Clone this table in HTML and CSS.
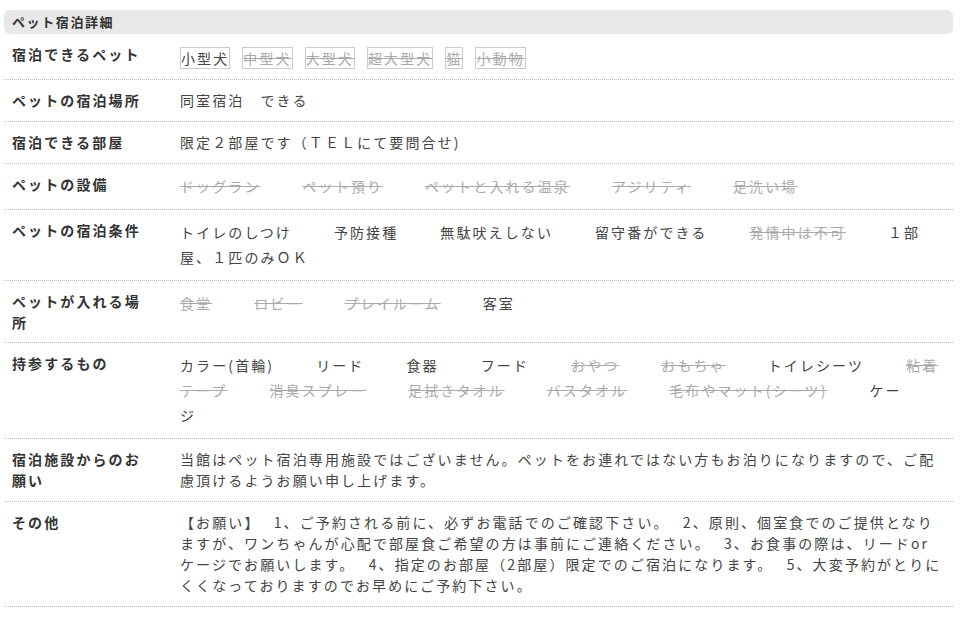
FILE: index.html
```html
<!DOCTYPE html>
<html lang="ja">
<head>
    <meta charset="UTF-8">
    <title>ペット宿泊詳細</title>
    <link rel="stylesheet" href="styles.css">
</head>
<body>
    <div class="pet-detail">
        <h2 class="pet-title">ペット宿泊詳細</h2>

        <dl class="pet-list">
            <div class="pet-row">
                <dt>宿泊できるペット</dt>
                <dd class="tags"><span class="tag">小型犬</span><span class="tag off">中型犬</span><span class="tag off">大型犬</span><span class="tag off">超大型犬</span><span class="tag off">猫</span><span class="tag off">小動物</span></dd>
            </div>
            <div class="pet-row">
                <dt>ペットの宿泊場所</dt>
                <dd>同室宿泊　できる</dd>
            </div>
            <div class="pet-row">
                <dt>宿泊できる部屋</dt>
                <dd>限定２部屋です（ＴＥＬにて要問合せ)</dd>
            </div>
            <div class="pet-row">
                <dt>ペットの設備</dt>
                <dd class="items"><span class="off">ドッグラン</span><span class="off">ペット預り</span><span class="off">ペットと入れる温泉</span><span class="off">アジリティ</span><span class="off">足洗い場</span></dd>
            </div>
            <div class="pet-row">
                <dt>ペットの宿泊条件</dt>
                <dd class="items"><span>トイレのしつけ</span><span>予防接種</span><span>無駄吠えしない</span><span>留守番ができる</span><span class="off">発情中は不可</span><span>１部屋、１匹のみＯＫ</span></dd>
            </div>
            <div class="pet-row">
                <dt>ペットが入れる場所</dt>
                <dd class="items"><span class="off">食堂</span><span class="off">ロビー</span><span class="off">プレイルーム</span><span>客室</span></dd>
            </div>
            <div class="pet-row">
                <dt>持参するもの</dt>
                <dd class="items"><span>カラー(首輪)</span><span>リード</span><span>食器</span><span>フード</span><span class="off">おやつ</span><span class="off">おもちゃ</span><span>トイレシーツ</span><span class="off">粘着テープ</span><span class="off">消臭スプレー</span><span class="off">足拭きタオル</span><span class="off">バスタオル</span><span class="off">毛布やマット(シーツ)</span><span>ケージ</span></dd>
            </div>
            <div class="pet-row">
                <dt>宿泊施設からのお願い</dt>
                <dd>当館はペット宿泊専用施設ではございません。ペットをお連れではない方もお泊りになりますので、ご配慮頂けるようお願い申し上げます。</dd>
            </div>
            <div class="pet-row">
                <dt>その他</dt>
                <dd>【お願い】 1、ご予約される前に、必ずお電話でのご確認下さい。 2、原則、個室食でのご提供となりますが、ワンちゃんが心配で部屋食ご希望の方は事前にご連絡ください。 3、お食事の際は、リードorケージでお願いします。 4、指定のお部屋（2部屋）限定でのご宿泊になります。 5、大変予約がとりにくくなっておりますのでお早めにご予約下さい。</dd>
            </div>
        </dl>
    </div>
</body>
</html>
```

FILE: styles.css
```css
body {
    margin: 0;
    font-family: "Noto Sans CJK JP", "Noto Sans", sans-serif;
    color: #333;
    background: #fff;
}
.pet-detail {
    width: 949px;
    margin: 10px 0 0 4px;
}
.pet-title {
    margin: 0;
    height: 24px;
    line-height: 24px;
    padding-left: 8px;
    background-color: #e8e8e8;
    border-radius: 6px;
    font-size: 13px;
    font-weight: bold;
    letter-spacing: 1.6px;
}
.pet-list {
    margin: 0;
}
.pet-row {
    display: grid;
    grid-template-columns: 176px 1fr;
    border-bottom: 1px dotted #bbb;
}
.pet-row dt {
    padding: 10px 32px 10px 8px;
    font-size: 14px;
    font-weight: bold;
    line-height: 20.5px;
    letter-spacing: 2.1px;
}
.pet-row dd {
    margin: 0;
    padding: 10px 9px 10px 0;
    font-size: 14px;
    line-height: 21px;
    letter-spacing: 2.1px;
    word-spacing: 8px;
    color: #444;
}
.pet-row dd.items,
.pet-row dd.tags {
    line-height: 25px;
}
.items span {
    margin-right: 42px;
}
.tag {
    display: inline-block;
    margin-right: 12px;
    border: 1px solid #ccc;
    line-height: 20px;
    vertical-align: middle;
}
.off {
    color: #aaa;
    text-decoration: line-through;
}
```
